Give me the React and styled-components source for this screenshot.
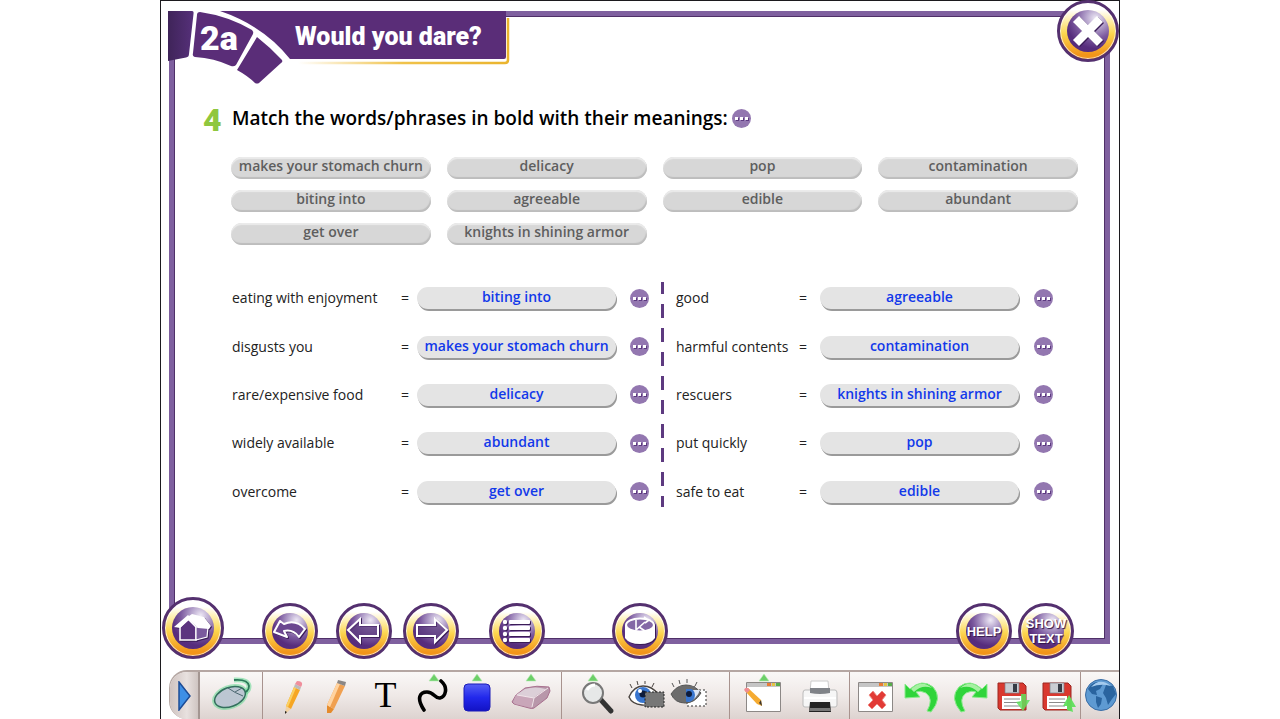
import React from "react";
import styled, { createGlobalStyle } from "styled-components";

const Global = createGlobalStyle`
  *, *::before, *::after { box-sizing: border-box; }
  body { margin: 0; background: #fff; font-family: "Open Sans", "Noto Sans", sans-serif; color: #222; }
  button { font: inherit; color: inherit; border: 0; padding: 0; background: none; cursor: pointer; }
  h1, h2, p { margin: 0; }
  svg { display: block; }
`;

const Stage = styled.main`
  width: 75%;
  min-height: 100vh;
  margin: 0 auto;
  display: flex;
  flex-direction: column;
  border: 1px solid #1c1a1e;
  border-bottom: 0;
`;

const Board = styled.section`
  position: relative;
  flex: 1;
  margin: 10px 9px 26px 8px;
  padding: 86px 27px 112px 29px;
  border: 5px solid #7f609f;
  box-shadow: inset 0 0 0 1px #4f3068;
`;

const Banner = styled.header`
  position: absolute;
  top: -5px;
  left: -6px;
`;

const UnitNumber = styled.p`
  position: absolute;
  top: 5px;
  left: 32px;
  color: #fff;
  font: 900 34px/44px Roboto, "Liberation Sans", sans-serif;
`;

const Title = styled.h1`
  position: absolute;
  top: 8px;
  left: 127px;
  color: #fff;
  white-space: nowrap;
  font: 900 25px/36px Roboto, "Liberation Sans", sans-serif;
`;

const RoundButton = styled.button`
  flex: none;
  width: ${(p) => p.$size}px;
  height: ${(p) => p.$size}px;
  margin-left: ${(p) => p.$gap || 0}px;
  padding: 7px;
  border: 3px solid #54306f;
  border-radius: 50%;
  background: linear-gradient(180deg, #fff 12%, #fff0b0 30%, #fcd54e 55%, #f2951a 92%);
  box-shadow: inset 0 0 0 1px rgba(255, 255, 255, 0.7);
`;

const Disc = styled.span`
  width: 100%;
  height: 100%;
  display: flex;
  align-items: center;
  justify-content: center;
  border-radius: 50%;
  color: #fff;
  text-align: center;
  white-space: nowrap;
  font: bold 13px/15px "Liberation Sans", sans-serif;
  text-shadow: 1px 1px 1px #2f1548;
  background: radial-gradient(circle at 68% 20%, #eee9f5 0, #b5a3cc 22%, #7c5a9f 45%, #572d7d 68%, #54297a 100%);

  svg { flex: none; overflow: visible; filter: drop-shadow(1px 1px 0 #3a1c57); }
`;

const CloseCorner = styled.div`
  position: absolute;
  top: -16px;
  right: -14px;
`;

const Nav = styled.nav`
  position: absolute;
  left: -12px;
  right: 31px;
  bottom: -20px;
  display: flex;
  align-items: flex-end;
`;

const Push = styled.div`
  flex: 1;
`;

const Task = styled.div`
  display: flex;
  align-items: center;
  height: 32px;
`;

const TaskNumber = styled.span`
  width: 29px;
  padding-top: 4px;
  color: #8fc73e;
  font: 900 32px/32px Roboto, "Liberation Sans", sans-serif;
`;

const Instruction = styled.h2`
  margin-right: 4px;
  color: #000;
  white-space: nowrap;
  font: 600 19px/26px "Open Sans", "Noto Sans", sans-serif;
`;

const Bank = styled.div`
  display: grid;
  grid-template-columns: repeat(4, 1fr);
  gap: 11px 16px;
  margin: 23px 0 0 28px;
`;

const Chip = styled.button`
  height: 22px;
  padding-bottom: 4px;
  border-radius: 11px;
  background: #d7d7d7;
  box-shadow: inset 0 2px 1px #ebebeb, inset -1px -2px 1px #bdbdbd;
  color: #5e5e5e;
  white-space: nowrap;
  font-size: 14px;
  line-height: 18px;
  font-weight: 600;
`;

const Columns = styled.div`
  display: grid;
  grid-template-columns: 417fr 3px 377fr;
  gap: 12px;
  margin: 29px 25px 0 29px;
`;

const Column = styled.div`
  display: grid;
  grid-auto-rows: 1fr;
  min-height: 242px;
`;

const Divider = styled.div`
  height: 225px;
  margin-top: 8px;
  background: linear-gradient(#5d3a80 14px, transparent 14px) 0 -2px / 3px 24px repeat-y;
`;

const Row = styled.div`
  display: grid;
  grid-template-columns: 1fr ${(p) => p.$equals}px 199px auto;
  align-items: center;

  > :last-child { margin-left: ${(p) => p.$gap}px; }
`;

const Meaning = styled.span`
  white-space: nowrap;
  font-size: 14px;
  line-height: 20px;
`;

const Answer = styled.button`
  height: 22px;
  padding-bottom: 2px;
  border-radius: 11px;
  background: #e4e4e4;
  box-shadow: 1px 2px 0 #9a9a9a;
  color: #1239ea;
  white-space: nowrap;
  font-size: 14px;
  line-height: 20px;
  font-weight: 600;
`;

const DotsButton = styled.button`
  display: flex;
  align-items: center;
  justify-content: center;
  gap: 2px;
  width: 19px;
  height: 19px;
  border-radius: 50%;
  background: #9377b0;
`;

const Dot = styled.i`
  width: 3px;
  height: 3px;
  background: #fff;
  box-shadow: 1px 1px 0 #5d3a80;
`;

const Toolbar = styled.footer`
  display: flex;
  height: 49px;
  margin-left: 8px;
  border-top: 2px solid #b5a7a3;
  border-left: 1px solid #b5a7a3;
  border-radius: 18px 0 0 18px;
  overflow: hidden;
  background: linear-gradient(#faf8f7, #efe9e7 50%, #ddd3d0);
`;

const Handle = styled.button`
  width: 30px;
  display: flex;
  align-items: center;
  padding-left: 8px;
  border-right: 2px solid #a39692;
  background: linear-gradient(90deg, #cfc3c0, #e8e1df 60%, #cfc5c2);
`;

const Group = styled.div`
  display: flex;
  flex: ${(p) => p.$share} 1 0;
  min-width: 0;
  border-right: ${(p) => (p.$last ? 0 : 1)}px solid #a8938e;
`;

const Tool = styled.button`
  flex: none;
  width: ${(p) => p.$w}px;
  height: 46px;
  margin-left: ${(p) => p.$gap}px;
  color: #000;
  font: 36px/46px "Liberation Serif", serif;
`;

const Art = ({ w, children }) => (
  <svg width={w} height="46" viewBox={`0 0 ${w} 46`} aria-hidden="true">{children}</svg>
);

const Up = ({ x }) => <path d={`M${x} 2l5 7h-10z`} fill="#6ccf68" stroke="#b9ebb5" strokeWidth=".6" />;

const Glyph = ({ children }) => (
  <svg width="36" height="36" viewBox="-18 -18 36 36" aria-hidden="true">{children}</svg>
);

const Dots = ({ label }) => (
  <DotsButton aria-label={label}><Dot /><Dot /><Dot /></DotsButton>
);

const Floppy = ({ arrow }) => (
  <Art w={34}>
    <path d="M1 11h25l3 3v24H3l-2-2z" fill="#d9382f" stroke="#9c2620" />
    <path d="M8 11h14v10H8z" fill="#c9cdd3" stroke="#7b7f86" strokeWidth=".7" />
    <path d="M16 12h4v8h-4z" fill="#353b45" />
    <path d="M5 24h20v13H5z" fill="#fff" />
    <path d="M7 27h16M7 30.500h16M7 34h16" stroke="#8a8a8a" strokeWidth="1.200" />
    {arrow === "down"
      ? <path d="M24 22h5v6h4l-7 11-7-9 5-1z" fill="#5fe05c" fillOpacity=".85" />
      : <path d="M27 23l7 12h-4l1 5-6-2v-4h-4z" fill="#5fe05c" fillOpacity=".95" />}
  </Art>
);

const WindowFrame = () => (
  <>
    <path d="M3.500 10.500h34v29h-34z" fill="#fff" stroke="#8c8886" />
    <path d="M4 11h33v4H4z" fill="#c5c5c5" />
    <path d="M24 11h4v3h-4z" fill="#e87b34" />
    <path d="M29 11h3v3h-3z" fill="#e3c443" />
    <path d="M33 11h4v3h-4z" fill="#57ad4b" />
  </>
);

const bank = [
  "makes your stomach churn", "delicacy", "pop", "contamination",
  "biting into", "agreeable", "edible", "abundant",
  "get over", "knights in shining armor",
];

const left = [
  ["eating with enjoyment", "biting into"],
  ["disgusts you", "makes your stomach churn"],
  ["rare/expensive food", "delicacy"],
  ["widely available", "abundant"],
  ["overcome", "get over"],
];

const right = [
  ["good", "agreeable"],
  ["harmful contents", "contamination"],
  ["rescuers", "knights in shining armor"],
  ["put quickly", "pop"],
  ["safe to eat", "edible"],
];

const Matches = ({ rows, equals, gap }) => (
  <Column>
    {rows.map(([meaning, answer]) => (
      <Row key={meaning} $equals={equals} $gap={gap}>
        <Meaning>{meaning}</Meaning>
        <Meaning>=</Meaning>
        <Answer>{answer}</Answer>
        <Dots label={`Justify ${meaning}`} />
      </Row>
    ))}
  </Column>
);

const BannerArt = () => (
  <svg width="344" height="76" viewBox="0 0 344 76" aria-hidden="true">
    <defs>
      <linearGradient id="edge"><stop offset="0" stopColor="#3f2459" /><stop offset="1" stopColor="#56307a" /></linearGradient>
      <linearGradient id="gold"><stop offset="0" stopColor="#fff" /><stop offset=".5" stopColor="#f0c24a" /><stop offset="1" stopColor="#eab42e" /></linearGradient>
    </defs>
    <path d="M0 0H338V6H341V50H110L70 40L0 48Z" fill="#fff" />
    <path d="M130 52H337q3 0 3-3V7" fill="none" stroke="url(#gold)" strokeWidth="2.500" />
    <path d="M52 0H338V46q0 2-2 2H122Q96 15 52 0Z" fill="#5a2d78" />
    <path d="M0 0H24Q26 0 25.500 3L21 43Q21 46 18 46.500L0 50Z" fill="url(#edge)" />
    <path d="M32 1Q60 5 84 19Q86 21 85 23L68 54Q66 56 63 55Q46 47 27 46Q24 45 25 42L29 4Q29 1 32 1Z" fill="#5a2d78" />
    <path d="M89 26Q103 37 114 49Q115 51 113 52L91 72Q89 73 87 72Q80 65 69 59Z" fill="#5a2d78" />
  </svg>
);

export default function App() {
  return (
    <>
      <Global />
      <Stage>
        <Board>
          <Banner>
            <BannerArt />
            <UnitNumber>2a</UnitNumber>
            <Title>Would you dare?</Title>
          </Banner>
          <CloseCorner>
            <RoundButton $size={62} aria-label="Close">
              <Disc>
                <Glyph>
                  <path d="M-12-12 12 12M12-12-12 12" stroke="#fff" strokeWidth="8.500" />
                </Glyph>
              </Disc>
            </RoundButton>
          </CloseCorner>

          <Task>
            <TaskNumber>4</TaskNumber>
            <Instruction>Match the words/phrases in bold with their meanings:</Instruction>
            <Dots label="More" />
          </Task>

          <Bank>
            {bank.map((word) => <Chip key={word}>{word}</Chip>)}
          </Bank>

          <Columns>
            <Matches rows={left} equals={16} gap={14} />
            <Divider />
            <Matches rows={right} equals={21} gap={15} />
          </Columns>

          <Nav>
            <RoundButton $size={62} aria-label="Home">
              <Disc>
                <Glyph>
                  <path d="M-13-1V12H3V-1L-5-9Z" fill="#5c347f" stroke="#fff" strokeWidth="1.500" />
                  <path d="M3 12 14 9 15-1H3Z" fill="#7a5a9d" stroke="#fff" strokeWidth="1.200" />
                  <path d="M-19-1-5-13-4-12-1-14 11-11 18-2 16 1 5 0-4-8-13 0Z" fill="#fff" />
                </Glyph>
              </Disc>
            </RoundButton>
            <RoundButton $size={56} $gap={38} aria-label="Undo">
              <Disc>
                <Glyph>
                  <path d="M-16 1-10-10-6-7Q6-12 15-2L9 6Q3-2-6 0L-3 6Z" fill="#6b4790" stroke="#fff" strokeWidth="2" strokeLinejoin="round" />
                </Glyph>
              </Disc>
            </RoundButton>
            <RoundButton $size={56} $gap={18} aria-label="Previous">
              <Disc>
                <Glyph>
                  <path d="M-16-1-4-12V-6H14V5H-4V11Z" fill="#6b4790" fillOpacity=".5" stroke="#fff" strokeWidth="2" />
                </Glyph>
              </Disc>
            </RoundButton>
            <RoundButton $size={56} $gap={11} aria-label="Next">
              <Disc>
                <Glyph>
                  <path d="M16-1 4-12V-6H-14V5H4V11Z" fill="#6b4790" fillOpacity=".5" stroke="#fff" strokeWidth="2" />
                </Glyph>
              </Disc>
            </RoundButton>
            <RoundButton $size={56} $gap={30} aria-label="Contents">
              <Disc>
                <Glyph>
                  {[-9, -3, 3, 9].map((y) => (
                    <g key={y} fill="#fff">
                      <circle cx="-12" cy={y} r="2.200" />
                      <rect x="-8" y={y - 2} width="21" height="4" rx="1" />
                    </g>
                  ))}
                </Glyph>
              </Disc>
            </RoundButton>
            <RoundButton $size={56} $gap={67} aria-label="Game">
              <Disc>
                <Glyph>
                  <path d="M-15-6V7Q-11 13 0 13T15 7V-6Z" fill="#fff" />
                  <ellipse cy="-6" rx="14" ry="6.500" fill="#8468a6" stroke="#fff" strokeWidth="2" />
                  <path d="M-4-11V-1L5-9M-1-4 5 0M4-14l5 3-4 3" fill="none" stroke="#fff" strokeWidth="1.600" />
                </Glyph>
              </Disc>
            </RoundButton>
            <Push />
            <RoundButton $size={56} $gap={0}><Disc>HELP</Disc></RoundButton>
            <RoundButton $size={56} $gap={6}><Disc>SHOW<br />TEXT</Disc></RoundButton>
          </Nav>
        </Board>

        <Toolbar>
          <Handle aria-label="Collapse toolbar">
            <svg width="14" height="30" viewBox="0 0 14 30" aria-hidden="true">
              <path d="M1 1 12 15 1 29Z" fill="#3d8fe6" stroke="#1d4c96" strokeWidth="1.500" />
            </svg>
          </Handle>
          <Group $share={62}>
            <Tool $w={42} $gap={12} aria-label="Mouse">
              <Art w={42}>
                <g fill="none" stroke="#63d892" strokeOpacity=".55" strokeWidth="5">
                  <path d="M22 8q14-1 15 6 0 7-9 7" />
                  <ellipse cx="18" cy="25" rx="16" ry="9.500" transform="rotate(-20 18 25)" />
                </g>
                <path d="M22 8q14-1 15 6 0 7-9 7" fill="none" stroke="#2d7a5a" strokeWidth="1.800" />
                <ellipse cx="18" cy="25" rx="16" ry="9.500" transform="rotate(-20 18 25)" fill="#bcc6d2" stroke="#34705e" strokeWidth="1.500" />
                <path d="M16 16q7 5 15 8M23 20l7-4" fill="none" stroke="#4a6670" />
              </Art>
            </Tool>
          </Group>
          <Group $share={300}>
            <Tool $w={22} $gap={20} aria-label="Pencil">
              <Art w={22}>
                <path d="M2 42 3 34 8 37Z" fill="#f2d2a0" />
                <path d="M2 42 2 39 4 40Z" fill="#222" />
                <path d="M3 34 11 15 17 18 8 37Z" fill="#f6a623" />
                <path d="M3 34 11 15 13 16 5 35Z" fill="#fbd061" />
                <path d="M11 15 12 12 18 15 17 18Z" fill="#bbb" />
                <path d="M12 12 14 9Q20 9 19 13L18 15Z" fill="#f08f9c" />
              </Art>
            </Tool>
            <Tool $w={24} $gap={19} aria-label="Marker">
              <Art w={24}>
                <path d="M3 41 3 33 10 37 7 41Z" fill="#e58b2c" />
                <path d="M3 33 13 11 21 14 10 37Z" fill="#f0a050" />
                <path d="M3 33 13 11 16 12 6 35Z" fill="#ffd3a0" />
                <path d="M13 11 14 8 22 10 21 14Z" fill="#8b8785" />
              </Art>
            </Tool>
            <Tool $w={24} $gap={26} aria-label="Text">T</Tool>
            <Tool $w={32} $gap={19} aria-label="Curve">
              <Art w={32}>
                <Up x={17} />
                <path d="M7 38C-1 26 3 20 10 20S18 27 23 26 32 16 24 9" fill="none" stroke="#000" strokeWidth="3.600" strokeLinecap="round" />
              </Art>
            </Tool>
            <Tool $w={28} $gap={14} aria-label="Shape">
              <Art w={28}>
                <defs>
                  <linearGradient id="blue" x2="0" y2="1"><stop offset="0" stopColor="#5560f4" /><stop offset=".5" stopColor="#2228ec" /><stop offset="1" stopColor="#1212c4" /></linearGradient>
                </defs>
                <Up x={14} />
                <rect x="1" y="12" width="26" height="27" rx="4" fill="url(#blue)" stroke="#1a1ab8" />
              </Art>
            </Tool>
            <Tool $w={40} $gap={20} aria-label="Eraser">
              <Art w={40}>
                <Up x={20} />
                <path d="M1 30 5 23 14 16Q26 13 38 15L39 19 36 26 23 36Q21 37 18 36L3 32Z" fill="#b897aa" stroke="#a9718f" />
                <path d="M5 23 14 17Q24 14 35 17L22 26Z" fill="#dccfd8" />
                <path d="M2 30 5 23 22 26 21 36 4 32Z" fill="#c9a6b9" />
                <path d="M21 35 23 26 37 16M23 26 6 23" fill="none" stroke="#f1e5ea" />
              </Art>
            </Tool>
          </Group>
          <Group $share={168}>
            <Tool $w={34} $gap={19} aria-label="Zoom">
              <Art w={34}>
                <Up x={12} />
                <path d="M20 28 30 39" stroke="#333" strokeWidth="5" strokeLinecap="round" />
                <circle cx="12" cy="21" r="10" fill="#e6e8e8" stroke="#787878" strokeWidth="2" />
                <path d="M6 18q3-5 8-5" fill="none" stroke="#fff" strokeWidth="3" />
              </Art>
            </Tool>
            <Tool $w={38} $gap={13} aria-label="Hide area">
              <Art w={38}>
                <path d="M1 25Q6 14 15 14T30 22Q24 34 14 33T1 25Z" fill="#fff" stroke="#4a4440" strokeWidth="1.400" />
                <path d="M4 16 2 12M10 13 9 9M17 12V9M24 15 26 11" stroke="#4a4440" />
                <circle cx="15" cy="23" r="8" fill="#3976cf" /><circle cx="15" cy="22" r="3.500" fill="#0e1c3c" /><circle cx="12" cy="19" r="2" fill="#fff" />
                <path d="M17 20H36V35H17Z" fill="#777" stroke="#222" strokeDasharray="2 1.500" />
              </Art>
            </Tool>
            <Tool $w={38} $gap={4} aria-label="Reveal area">
              <Art w={38}>
                <path d="M17 18H36V34H17Z" fill="#fff" stroke="#333" strokeDasharray="2 2" />
                <path d="M1 22Q7 13 16 13T31 21Q25 31 15 31T1 22Z" fill="#6c6c6c" stroke="#555" />
                <path d="M16 18H30Q27 27 18 30Z" fill="#dce6f5" />
                <path d="M4 15 2 11M10 12 9 8M17 11V7M25 14 27 10" stroke="#555" />
                <circle cx="18" cy="23" r="7" fill="#3976cf" /><circle cx="19" cy="22" r="3" fill="#0e1c3c" />
                <path d="M9 14H25V17H16V30H11Z" fill="#6c6c6c" />
              </Art>
            </Tool>
          </Group>
          <Group $share={120}>
            <Tool $w={40} $gap={13} aria-label="Notes">
              <Art w={40}>
                <Up x={21} />
                <WindowFrame />
                <path d="M2 19 5 16 18 28 19 34 14 32Z" fill="#f5ab31" />
                <path d="M1 18Q2 15 5 16L7 18 4 21Z" fill="#ef8b92" />
                <path d="M16 31 18 28 19 34Z" fill="#3b342c" />
              </Art>
            </Tool>
            <Tool $w={36} $gap={19} aria-label="Print">
              <Art w={36}>
                <path d="M9 9H26L27 20H8Z" fill="#fff" stroke="#ccc" />
                <path d="M3 18H33Q35 18 35 21V33Q35 35 33 35H3Q1 35 1 33V21Q1 18 3 18Z" fill="#f6f6f6" stroke="#bbb" />
                <path d="M8 16H28V21Q18 23 8 21Z" fill="#808388" />
                <path d="M2 25H34V27H2Z" fill="#fff" />
                <path d="M8 30H28L29 40H7Z" fill="#222" />
                <path d="M8 36H28L29 39H7Z" fill="#777" />
              </Art>
            </Tool>
          </Group>
          <Group $share={232}>
            <Tool $w={42} $gap={5} aria-label="Clear page">
              <Art w={42}>
                <WindowFrame />
                <path d="M14 23 18 19 22 24 27 19 31 23 27 28 31 33 27 37 22 32 17 37 13 33 18 28Z" fill="#e23b36" stroke="#f08a84" />
              </Art>
            </Tool>
            <Tool $w={36} $gap={7} aria-label="Undo drawing">
              <Art w={36}>
                <path d="M1 12 6 17Q18 6 29 15Q39 26 27 40L23 39Q30 27 22 21Q16 18 12 20L16 25 1 26Z" fill="#2fd43a" stroke="#8bea8c" />
                <path d="M7 17Q18 7 28 16Q18 12 10 20Z" fill="#a6f0a2" />
              </Art>
            </Tool>
            <Tool $w={36} $gap={12} aria-label="Redo drawing">
              <Art w={36}>
                <g transform="translate(36 0) scale(-1 1)">
                  <path d="M1 12 6 17Q18 6 29 15Q39 26 27 40L23 39Q30 27 22 21Q16 18 12 20L16 25 1 26Z" fill="#2fd43a" stroke="#8bea8c" />
                  <path d="M7 17Q18 7 28 16Q18 12 10 20Z" fill="#a6f0a2" />
                </g>
              </Art>
            </Tool>
            <Tool $w={34} $gap={9} aria-label="Load"><Floppy arrow="down" /></Tool>
            <Tool $w={34} $gap={11} aria-label="Save"><Floppy arrow="up" /></Tool>
          </Group>
          <Group $share={38} $last>
            <Tool $w={34} $gap={3} aria-label="Web">
              <Art w={34}>
                <circle cx="17" cy="23" r="15.500" fill="#5e9ad2" stroke="#3a6da5" />
                <path d="M4 17Q7 11 13 10L19 12 16 17 12 19 13 23 8 22ZM12 24 18 26 17 32 14 36 12 30ZM22 13 29 14 32 22 28 27 24 33 22 26 19 21Z" fill="#2a649f" />
                <path d="M7 15Q16 5 27 14Q17 11 7 15Z" fill="#a5cbee" />
              </Art>
            </Tool>
          </Group>
        </Toolbar>
      </Stage>
    </>
  );
}
